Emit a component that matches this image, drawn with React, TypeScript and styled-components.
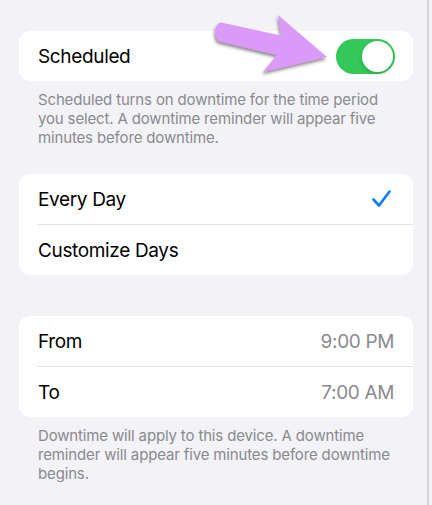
import styled, { createGlobalStyle } from "styled-components";

const GlobalStyle = createGlobalStyle`
  html, body {
    margin: 0;
    padding: 0;
    background: #f2f2f7;
  }
  body {
    font-family: Inter, "Noto Sans", "Liberation Sans", sans-serif;
    -webkit-font-smoothing: antialiased;
  }
`;

const Page = styled.div`
  position: relative;
  box-sizing: border-box;
  width: 429px;
  min-height: 505px;
  padding: 31px 14px 0 19px;
  border-right: 2px solid #d3d3d8;
`;

const Card = styled.div`
  background: #fff;
  border-radius: 11px;
  overflow: hidden;
`;

const Row = styled.div<{ divider?: boolean }>`
  display: flex;
  align-items: center;
  justify-content: space-between;
  height: 50px;
  padding: 0 19px;
  position: relative;
  ${(p) =>
    p.divider &&
    `
    &::after {
      content: "";
      position: absolute;
      left: 18px;
      right: 0;
      bottom: -1px;
      height: 1px;
      background: #e3e3e8;
    }
  `}
  & + & {
    margin-top: 1px;
  }
`;

const Label = styled.span`
  font-size: 19px;
  color: #000;
  letter-spacing: -0.35px;
`;

const Value = styled.span`
  font-size: 19px;
  color: #8a8a8e;
  letter-spacing: -0.35px;
`;

const Footer = styled.p<{ top: number }>`
  margin: 0;
  padding: ${(p) => p.top}px 19px 0;
  font-size: 15px;
  line-height: 19px;
  letter-spacing: -0.15px;
  color: #8a8a8e;
`;

const Spacer = styled.div<{ h: number }>`
  height: ${(p) => p.h}px;
`;

const Toggle = styled.div<{ on?: boolean }>`
  box-sizing: border-box;
  width: 59px;
  height: 35px;
  border-radius: 18px;
  background: ${(p) => (p.on ? "#34c759" : "#e9e9ea")};
  padding: 2px;
  display: flex;
  justify-content: ${(p) => (p.on ? "flex-end" : "flex-start")};
  margin-right: -1px;
`;

const Knob = styled.div`
  width: 31px;
  height: 31px;
  border-radius: 50%;
  background: #fff;
  box-shadow: 0 2px 4px rgba(0, 0, 0, 0.15);
`;

const Check = () => (
  <svg width="19" height="18" viewBox="0 0 19 18" style={{ marginRight: 3 }}>
    <polyline
      points="1.5,9.5 7,15.5 17.5,1.5"
      fill="none"
      stroke="#0a7aff"
      strokeWidth="2.6"
      strokeLinecap="round"
      strokeLinejoin="round"
    />
  </svg>
);

const ArrowLayer = styled.svg`
  position: absolute;
  left: 210px;
  top: 8px;
  pointer-events: none;
`;

const Arrow = () => (
  <ArrowLayer width="130" height="74" viewBox="210 8 130 74">
    <defs>
      <filter id="sh" x="-20%" y="-20%" width="140%" height="160%">
        <feDropShadow dx="-1" dy="2.5" stdDeviation="1.8" floodColor="#3a2a40" floodOpacity="0.55" />
      </filter>
    </defs>
    <path
      d="M221 22.5 L281 35.5 L278 15 L327 57 L263 72 L277 55 L220 41.5 C214 40 213 24 221 22.5 Z"
      fill="#da9bf8"
      filter="url(#sh)"
    />
  </ArrowLayer>
);

export default function App() {
  return (
    <>
      <GlobalStyle />
      <Page>
        <Card>
          <Row>
            <Label>Scheduled</Label>
            <Toggle on>
              <Knob />
            </Toggle>
          </Row>
        </Card>
        <Footer top={9}>
          Scheduled turns on downtime for the time period you select. A
          downtime reminder will appear five minutes before downtime.
        </Footer>
        <Spacer h={27} />
        <Card>
          <Row divider>
            <Label>Every Day</Label>
            <Check />
          </Row>
          <Row>
            <Label>Customize Days</Label>
          </Row>
        </Card>
        <Spacer h={41} />
        <Card>
          <Row divider>
            <Label>From</Label>
            <Value>9:00 PM</Value>
          </Row>
          <Row>
            <Label>To</Label>
            <Value>7:00 AM</Value>
          </Row>
        </Card>
        <Footer top={9}>
          Downtime will apply to this device. A downtime reminder will appear
          five minutes before downtime begins.
        </Footer>
        <Arrow />
      </Page>
    </>
  );
}
